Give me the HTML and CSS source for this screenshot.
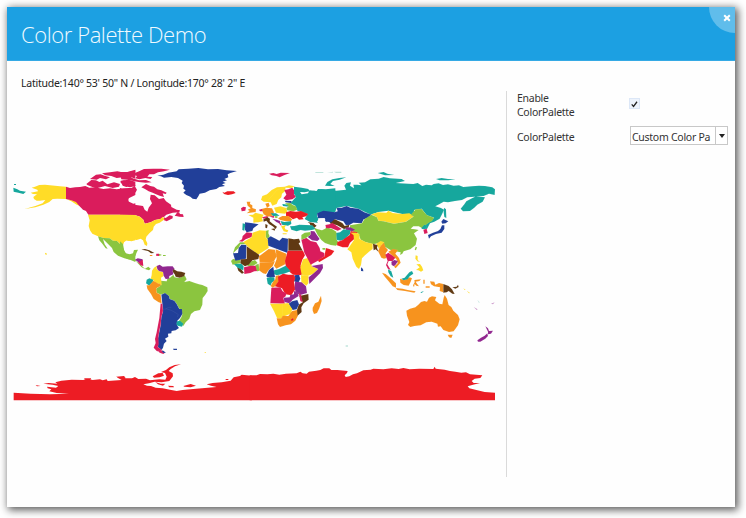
FILE: index.html
```html
<!DOCTYPE html>
<html lang="en">
<head>
<meta charset="utf-8">
<title>Color Palette Demo</title>
<link rel="stylesheet" href="styles.css">
</head>
<body>
<main class="window">
  <header class="header">
    <h1 class="title">Color Palette Demo</h1>
    <button class="close" aria-label="Close"><svg width="8" height="8" viewBox="0 0 8 8"><path d="M1.2 1.2 6.8 6.8M6.8 1.2 1.2 6.8"/></svg></button>
  </header>
  <div class="content">
    <section class="map-pane">
      <p class="coords">Latitude:140° 53' 50" N / Longitude:170° 28' 2" E</p>
      <svg class="map" viewBox="13 160 484 244">
        <!-- Alaska, western Canada and Mexico -->
        <g class="seamless" transform="translate(10 160) scale(.33333)">
          <path class="teal" d="M10 83 22 88 30 92 48 95 40 102 25 98 11 95ZM12 72h6v3h-6Z"/>
          <path class="yellow" d="M168 80 150 79 135 77 105 74 88 75 75 80 65 83 82 89 84 94 62 98 69 102 81 103 70 111 72 117 80 122 90 122 106 120 98 130 76 138 44 147 76 142 100 134 118 126 128 117 142 116 168 117 184 124 200 134 212 139 207 129 194 122 168 117ZM106 278l5 3-2 4-4-3Z"/>
          <path class="pink" d="M168 80 180 84 196 82 210 81 226 78 238 83 255 82 280 87 300 85 320 88 340 85 376 83V105L356 115 354 124 370 131 376 130V164H235L228 153 219 149 208 138 198 126 184 121 168 117ZM229 72 244 60 258 61 268 66 278 62 292 73 312 67 330 72 327 80 308 84 285 78 263 84 247 81 232 75ZM240 57 258 44 272 43 284 47 300 52 288 58 270 54 260 59ZM276 40 300 37 322 34 344 38 376 29V56L362 51 354 58 338 52 320 54 304 48 286 46ZM332 62 356 59 376 65V79L358 74 350 81 338 77Z"/>
          <path class="yellow" d="M234 164H376V241L364 244 350 241 342 247 338 259 330 252 321 243 309 242 299 235 281 234 264 229 247 221 240 211 236 198 239 181Z"/>
          <path class="green" d="M264 229 281 234 299 235 309 242 321 243 330 252 338 259 342 273 350 283 361 285 376 278V306L362 300 343 295 324 287 311 276 306 264 292 250 279 237 284 253 293 266 287 265 277 251 268 241Z"/>
        </g>

        <!-- Eastern Canada, Greenland, Central America -->
        <g class="seamless" transform="translate(120 160) scale(.33333)">
          <path class="pink" d="M0 84 16 90 31 86 44 78 51 89 47 97 34 104 24 117 27 128 43 134 54 136 69 138 74 149 82 155 86 143 96 130 90 117 92 104 104 106 117 117 131 114 138 124 153 134 154 141 170 149 180 151 178 157 158 158 139 164 131 172 137 174 149 166 158 168 158 175 140 184 131 180 132 170 121 177 105 180 92 187 74 191 70 179 60 170 44 165 0 164ZM164 168 175 152 180 162 189 163 191 171 178 170 168 168ZM64 82 78 72 91 78 102 80 112 88 124 91 140 98 137 102 128 100 132 111 119 107 108 103 98 98 86 94 75 87ZM0 65 12 61 32 66 28 75 42 71 47 78 30 82 12 78ZM33 43 54 35 72 27 100 26 124 26 150 29 132 34 114 37 102 43 88 43 82 50 97 51 92 57 76 54 58 58 46 55 51 48ZM0 36 25 36 49 32 34 41 17 45 0 45ZM2 50 28 48 38 55 57 61 78 60 95 67 77 68 56 66 40 63 22 59 4 58Z"/>
          <path class="navy" d="M112 47 130 44 145 38 170 34 176 28 205 26 235 24 264 28 294 27 320 31 351 33 331 39 323 43 325 52 313 57 321 61 308 65 317 69 306 73 315 78 298 81 289 87 269 91 255 98 239 101 235 109 229 118 218 116 211 110 199 105 190 98 197 91 190 86 192 77 185 69 188 62 174 54 154 51 132 53 123 49Z"/>
          <path class="red" d="M307 95 313 98 322 94 341 94 347 99 336 103 324 105 312 102Z"/>
          <path class="yellow" d="M0 164 44 165 60 170 70 179 74 191 92 187 105 180 121 177 128 170 134 178 119 188 108 192 101 200 99 210 88 220 79 230 77 239 82 250 81 258 74 254 69 241 62 236 50 240 37 238 27 243 15 240 8 250 0 242Z"/>
          <path class="green" d="M0 244 9 252 12 269 17 280 29 283 39 280 42 270 54 269 49 280 46 289 41 291 49 304 37 299 23 297 13 290 0 287Z"/>
          <path class="green" d="M46 302 60 312 68 320 75 326 85 320 92 326 87 331 77 328 65 322Z"/>
          <path class="purple" d="M45 299 53 295 68 298 66 305 55 307Z"/>
          <path class="pink" d="M54 307 68 299 70 318 62 316Z"/>
          <path class="brown" d="M64 269 75 267 88 271 103 279 93 280 84 273 74 271Z"/>
          <path class="pink" d="M109 281h8v7l-9-1Z"/><path class="green" d="M117 281 126 285 117 288ZM129 285h8v3h-8Z"/>
          <path class="orange" d="M89 285h8v3h-7Z"/>
          <path class="border-line" d="M0 164 44 165 60 170 70 179 74 191"/>
        </g>

        <!-- South America -->
        <g transform="translate(130 240) scale(.33333)">
          <path class="green" d="M92 122 110 124 112 116 122 112 130 104 134 112 148 114 164 106 170 118 163 126 178 123 195 129 207 133 217 135 232 142 233 153 226 164 218 174 217 194 210 210 193 214 183 222 178 236 167 247 160 258 145 246 154 232 157 222 148 206 140 192 133 182 119 177 117 168 104 160 92 164 80 158 78 146 90 138Z"/>
          <path class="yellow" d="M66 92 72 83 81 77 80 87 87 93 99 96 101 108 93 113 95 136 86 131 77 130 70 121 62 117 65 105Z"/>
          <path class="purple" d="M80 78 89 74 98 80 113 79 128 79 134 87 128 93 130 103 118 108 117 116 107 117 101 107 99 96 87 93 82 88Z"/>
          <path class="brown" d="M130 87 142 94 154 95 166 99 162 109 149 113 137 110 134 103 128 95Z"/>
          <path class="teal" d="M50 119 58 115 70 119 68 127 58 137 48 130Z"/>
          <path class="orange" d="M50 136 58 136 70 122 83 130 91 132 91 138 79 145 80 158 92 164 95 190 86 187 71 177 63 162 52 147Z"/>
          <path class="navy" d="M94 164 105 159 117 168 119 177 133 182 140 192 148 207 156 207 157 222 150 234 142 242 142 257 147 264 137 271 125 273 124 280 114 281 115 290 105 296 110 303 102 311 99 323 95 330 84 322 82 305 87 280 92 254 94 231 99 213 97 192ZM129 326h12v4h-10Z"/>
          <path class="pink" d="M92 190 97 192 99 213 94 231 92 254 88 272 85 292 86 313 83 321 93 328 93 337 80 333 71 323 77 309 75 297 80 277 84 255 88 234ZM83 332 96 331 105 338 100 342 89 338Z"/>
          <path class="navy" d="M95 332h5l8 6-8 1Z"/>
          <path class="teal" d="M141 244 150 242 160 251 156 260 143 257 139 252Z"/>
          <path class="border" d="M99 208 110 207 124 211 138 219 145 224 142 231M106 207 116 202 124 202"/>
          <path class="yellow" d="M224 336h4v2h-4Z"/>
        </g>

        <!-- Asia -->
        <g transform="translate(310 160) scale(.33333)">
          <path class="teal" d="M0 95 12 92 22 94 34 88 50 90 62 87 78 92 108 89 103 77 109 69 123 67 120 77 132 85 130 74 142 74 154 76 146 68 165 67 181 58 206 56 221 51 240 55 275 57 285 63 258 69 295 71 310 72 323 69 337 78 348 74 365 76 371 72 386 70 399 75 414 73 431 77 447 76 460 81 485 79 507 77 525 78 547 82 555 88 554 105 537 101 521 108 500 109 525 112 518 125 502 134 493 143 480 153 459 154 452 146 463 133 469 124 483 116 495 110 472 112 456 120 435 123 414 127 401 125 389 132 376 139 393 144 402 149 396 163 389 176 373 185 360 190 351 207 338 206 346 194 372 173 350 166 335 146 312 150 312 170 260 158 235 152 205 156 182 164 145 146 110 138 80 144 75 156 22 158 20 178 26 188 0 182ZM45 77 52 66 67 58 88 54 109 52 89 59 69 63 61 72 74 78 58 78ZM203 39 221 36 232 41 253 45 225 46ZM378 57 395 54 414 57 437 58 415 61 389 61ZM402 143 408 148 409 174 403 171 401 157Z"/>
          <path class="mist" d="M16 36h24v3H16ZM51 38l18-3 0 3ZM72 35h22v4H78Z"/>
          <path class="navy" d="M22 160 40 152 73 157 83 154 80 144 95 143 110 138 121 143 145 146 163 157 184 164 175 174 161 178 155 190 130 188 118 195 108 196 100 184 84 180 75 178 60 183 48 186 42 176 24 174ZM354 225 369 218 384 213 391 207 396 196 403 196 403 207 395 218 378 222 363 229 357 236ZM394 185 400 177 415 184 407 190 397 191Z"/>
          <path class="yellow" d="M184 163 205 157 229 158 235 152 248 159 277 162 298 160 312 169 303 175 288 185 252 191 221 184 205 182 201 172Z"/>
          <path class="green" d="M120 196 156 190 163 178 184 164 201 172 205 182 221 184 252 191 288 185 312 169 302 165 317 148 335 147 350 165 372 173 366 183 355 189 348 194 337 205 326 199 310 199 302 206 315 208 326 210 312 220 321 236 317 255 301 268 281 274 277 281 270 285 272 277 252 273 240 269 222 259 213 248 189 253 165 246 152 239 145 221 130 215 120 205ZM317 260 321 262 318 271 314 269Z"/>
          <path class="brown" d="M57 181 75 178 84 182 97 189 104 198 118 194 116 203 102 207 80 195 62 192ZM0 188 11 189 17 198 8 201 0 194Z"/>
          <path class="pink" d="M46 195 58 193 67 189 81 198 95 207 83 212 62 204 48 210Z"/>
          <path class="purple" d="M106 203 121 202 136 209 126 214 108 211Z"/>
          <path class="teal" d="M78 219 90 217 101 208 122 211 120 222 105 238 91 242 79 239Z"/>
          <path class="green" d="M11 202 21 207 36 211 50 204 65 206 79 215 79 237 86 248 78 257 62 255 45 249 34 240 23 225Z"/>
          <path class="red" d="M82 246 98 240 106 234 119 225 122 213 143 217 134 226 132 238 120 248 114 262 98 262 81 256Z"/>
          <path class="teal" d="M334 204 343 194 351 198 346 208 336 207Z"/><path class="pink" d="M340 209 350 206 353 219 343 222Z"/>
        </g>

        <!-- South Asia and Oceania -->
        <g transform="translate(310 225) scale(.33333)">
          <path class="yellow" d="M122 23 138 23 148 27 149 42 168 52 188 56 188 72 177 80 165 91 156 100 153 120 147 132 139 125 128 101 124 82 112 73 119 64 132 45 131 31ZM198 57 212 48 223 52 214 61 207 73 203 63Z"/>
          <path class="brown" d="M189 56 203 61 201 68 205 80 197 73 191 76Z"/>
          <path class="navy" d="M153 127 159 132 160 139 153 138Z"/>
          <path class="orange" d="M222 53 226 66 234 75 227 85 230 99 222 101 214 98 204 78 212 62ZM235 80 249 72 264 75 256 86 267 99 272 113 257 130 252 125 263 115 259 102 247 92ZM216 143 227 147 242 160 258 175 258 188 248 184 236 169 225 156ZM257 189 278 191 293 195 317 199 313 203 285 198 262 195ZM270 161 284 165 299 157 306 160 302 170 296 182 281 180 271 173ZM313 165 333 163 328 168 317 170 321 176 327 184 319 182 314 177 312 187 309 181 314 172ZM340 164h4v12h-4ZM360 169 373 170 376 179 387 174 400 177 400 202 389 198 390 187 372 184 363 178ZM347 184h12v4h-12Z"/>
          <path class="pink" d="M226 89 235 83 248 92 256 98 248 108 236 108 232 118 242 135 234 132 228 120 233 108Z"/>
          <path class="purple" d="M244 110 253 105 264 108 258 118 252 124 245 120Z"/>
          <path class="teal" d="M234 133 244 139 250 158 242 154 235 142ZM274 161 284 158 298 142 306 138 310 146 299 154 293 163 281 166ZM331 202 342 198 335 204Z"/>
          <path class="yellow" d="M317 91 323 93 323 105 330 111 322 109 316 101ZM319 118 330 117 336 125 340 136 333 140 325 136 318 135 329 127ZM460 190l7 4-3 1ZM470 197l10 7-3 1Z"/>
          <path class="brown" d="M400 177 416 183 426 193 434 207 427 206 416 198 410 202 400 203ZM427 187 440 185 444 179 446 186 436 191Z"/>
          <path class="orange" d="M289 257 300 251 316 247 325 239 333 231 343 228 351 230 357 218 366 214 379 216 375 226 388 236 397 238 401 218 404 210 411 221 416 240 424 246 430 257 444 270 449 283 444 301 431 319 417 321 400 315 392 304 384 305 382 296 365 290 349 292 332 301 313 303 301 306 294 300 298 291 291 272ZM413 329 428 329 424 339 417 337Z"/>
          <path class="purple" d="M526 304 534 310 537 318 549 317 543 326 534 328 534 320ZM502 346 513 338 524 332 532 325 534 333 526 341 511 350 504 350Z"/>
          <path class="lilac" d="M491 246l12 7-3 2ZM543 236l11-4-5 6Z"/>
          <path class="mist" d="M502 224l7 8-2 2ZM107 361h7v4h-7Z"/>
        </g>

        <!-- Africa and the Middle East -->
        <g transform="translate(225 225) scale(.33333)">
          <path class="pink" d="M42 49 51 43 53 33 65 22 82 24 80 36 62 43 52 50Z"/>
          <path class="green" d="M24 84 30 67 45 52 67 52 65 58 46 58 41 69 24 85ZM121 18 131 15 130 25 134 34 128 43 122 36ZM18 108 24 102 46 104 46 115 23 119ZM65 119 79 109 90 105 98 114 85 122 70 124Z"/>
          <path class="yellow" d="M55 51 80 37 83 23 104 16 123 17 122 37 130 46 131 69 109 83 98 89 66 63Z"/>
          <path class="navy" d="M128 40 137 34 152 41 163 47 172 38 189 41 188 84 150 70 130 62ZM24 85 39 84 41 69 49 59 64 60 63 101 31 107Z"/>
          <path class="brown" d="M190 40 207 43 222 41 226 52 221 55 233 77H190ZM65 64 103 90 100 102 82 106 71 119 60 124 46 115 47 103 65 102ZM36 126 46 129 57 143 51 146 40 137Z"/>
          <path class="orange" d="M102 94 131 72 150 74 155 94 147 109 136 113 104 111ZM104 112 136 113 150 108 143 124 131 135 123 147 114 145 102 136ZM152 73 184 86 182 117 154 131 147 122 155 102Z"/>
          <path class="red" d="M188 77 234 77 240 91 232 104 227 121 230 136 239 146 224 151 204 149 184 133 180 108Z"/>
          <path class="yellow" d="M234 103 248 99 260 115 260 124 280 132 265 147 247 153 230 149 226 127ZM228 150 251 152 250 175 244 182 229 171Z"/>
          <path class="purple" d="M259 123 293 117 294 129 285 145 268 162 253 177 251 157 266 145 280 132Z"/>
          <path class="teal" d="M147 136 162 132 182 122 197 139 177 146 155 151 147 147ZM125 159 135 156 148 157 149 167 140 173 137 182 128 176ZM27 117 49 116 56 124 55 136 46 132 36 127Z"/>
          <path class="navy" d="M124 152 132 135 145 125 147 139 150 156 126 157ZM208 151 222 149 226 161 220 174 207 169Z"/>
          <path class="pink" d="M57 127 77 122 94 122 101 138 88 139 76 144 58 147Z"/><path class="green" d="M91 120 101 116 103 137 96 139Z"/>
          <path class="orange" d="M137 183 145 169 151 163 152 153 163 150 163 166 152 183 143 188Z"/>
          <path class="red" d="M159 155 174 146 190 149 206 149 211 158 207 171 211 193 199 211 181 208 171 190 150 184 160 169Z"/>
          <path class="pink" d="M139 188 166 187 173 199 184 205 182 214 175 219 180 236 136 235Z"/>
          <path class="purple" d="M210 170 230 172 243 184 246 204 226 210 213 205 209 190ZM176 218 194 217 196 209 207 208 207 198 218 202 221 213 203 224 193 235 178 231Z"/>
          <path class="brown" d="M223 213 250 207 251 224 236 235 229 247 230 261 216 274 214 261 221 239 233 232Z"/>
          <path class="pink" d="M221 202 228 211 233 232 226 228 223 213Z"/>
          <path class="navy" d="M191 236 201 229 217 225 222 238 215 253 203 255 194 246Z"/>
          <path class="yellow" d="M135 236 168 236 190 234 202 253 197 266 178 274 172 280 156 279 147 259Z"/>
          <path class="orange" d="M155 280 169 280 173 272 190 273 201 258 216 255 218 274 211 287 198 298 182 301 165 306 159 298ZM263 248 270 235 280 230 288 212 290 228 283 250 276 264 267 267 263 257Z"/>
          <path class="red" d="M197 284 204 279 206 285 200 288Z"/>
          <path class="border" d="M172 238V278M131 69 150 74M207 151 208 172"/>
          <path class="pink" d="M229 44 244 38 257 48 274 52 284 69 286 79 298 84 299 94 279 107 257 119 248 101 238 83Z"/>
          <path class="red" d="M303 69 313 72 328 78 319 90 300 101 282 112 279 105 299 94 300 84Z"/>
          <path class="purple" d="M248 36 256 29 257 18 268 19 277 32 284 42 277 48 261 46Z"/>
          <path class="green" d="M229 30 239 23 256 21 256 29 243 39 229 44ZM292 69h9v5h-8Z"/>
        </g>

        <!-- Europe -->
        <g transform="translate(225 160) scale(.33333)">
          <path class="pink" d="M132 41 145 39 155 42 167 38 195 39 177 46 164 52 154 48 140 46ZM48 145 55 140 63 142 61 152 50 154Z"/>
          <path class="navy" d="M60 187 78 189 101 193 85 205 82 213 65 217 60 209Z"/>
          <path class="orange" d="M65 125 76 125 75 132 82 136 82 144 93 148 92 156 65 160 74 153 68 149 77 145 68 137ZM121 131 131 128 134 138 126 143ZM109 147 124 143 141 145 147 157 143 167 128 170 116 163Z"/>
          <path class="yellow" d="M108 119 112 108 126 103 140 90 156 82 179 80 192 76 209 79 200 84 181 83 182 92 171 101 169 112 160 120 155 132 142 137 137 127 116 125ZM147 143 166 139 184 144 187 157 180 161 153 158ZM70 165 84 164 91 158 116 164 111 174 114 184 100 187 85 188 85 173Z"/>
          <path class="pink" d="M178 90 190 88 202 83 208 92 207 103 213 110 202 118 183 121 175 115 184 104ZM102 149 111 147 113 154 105 154ZM111 172 127 168 130 173 116 176Z"/>
          <path class="teal seam" d="M207 80 230 83 250 87 254 94 239 97 225 96 230 103 249 100 254 91 275 93 279 87 302 88 331 85V155L295 155 279 158 274 167 280 174 278 188 255 186 239 177 248 163 230 157 217 152 211 137 196 130 213 111 207 101ZM172 132 198 135 193 140 174 138ZM53 190 61 192 58 212 52 210ZM137 160 153 160 164 167 144 168ZM167 183 178 186 198 183 199 192 189 197 171 194Z"/>
          <path class="navy seam" d="M277 160 295 152 328 157 336 170 318 188 303 183 297 172 279 174ZM179 122 200 123 198 129 182 127Z"/>
          <path class="white" d="M276 184 286 175 299 174 301 180 294 185 300 194 302 203 292 207 284 198Z"/>
          <path class="green" d="M180 130 196 129 203 135 212 138 217 149 205 154 186 151 184 144 191 139ZM150 168 158 169 157 174 149 173Z"/>
          <path class="red" d="M183 157 196 153 213 155 228 153 250 162 244 169 232 172 236 178 222 179 216 173 204 178 194 171 183 169Z"/>
          <path class="orange" d="M159 175 172 168 191 168 202 179 196 184 179 183 166 180Z"/>
          <path class="purple" d="M142 176 155 179 166 183 165 191 154 186Z"/><path class="pink" d="M132 169 148 168 146 174ZM161 190h8v8Z"/>
          <path class="brown" d="M115 178 127 172 135 176 134 184 144 192 156 200 152 207 143 199 132 192 124 182 116 185ZM138 207 151 205 149 212ZM121 192 128 195 126 205 121 203ZM248 186 263 189 275 197 268 203 259 195Z"/>
          <path class="yellow" d="M168 199 184 195 179 202 181 208 190 211 187 217 176 214ZM173 220h12v3h-12Z"/>
          <path class="teal" d="M195 199 208 198 223 194 243 195 262 196 271 207 261 210 240 212 227 210 215 214 199 209Z"/>
          <path class="border" d="M128 122 145 103 156 90 179 82M153 158 159 162"/>
        </g>

        <!-- Antarctica -->
        <g class="seamless" transform="translate(0 350) scale(.33333)">
          <path class="red" d="M41 128 92 131 150 133 207 131 170 129 148 124 154 118 143 115 141 110 168 113 175 108 158 104 130 101 146 99 172 101 166 97 184 92 215 89 250 90 262 86 278 90 300 88 308 91 320 88 323 93 365 90 350 82 369 82 377 85 396 85 405 81 415 87 438 86 450 91 478 88 496 89 500 80 495 69 483 66 498 60 508 52 524 45 543 43 525 49 512 57 506 63 518 70 519 79 508 93 485 97 464 95 447 100 430 103 441 107 453 108 467 113 488 115 510 119 530 123 548 120 580 117 650 111 633 107 620 103 638 99 665 97 692 92 701 82 720 78 725 74 756 77V150.500H41ZM107 105 122 108 111 109ZM253 85h20v3h-20ZM348 80 372 78 377 83 358 83ZM458 79 475 70 488 69 492 77 479 82 462 83ZM550 108 572 102 588 107 572 112 553 110ZM466 96 482 101 496 101 489 107 474 103ZM504 107 520 108 522 112 508 112ZM677 87h8v3h-8Z"/>
        </g>
        <g class="seamless" transform="translate(250 350) scale(.33333)">
          <path class="red" d="M-1 76 20 76 30 72 52 73 70 71 88 74 108 71 140 70 151 65 158 70 170 71 177 65 199 62 211 60 221 55 238 55 244 60 262 60 293 63 291 69 284 76 287 81 298 79 309 73 321 70 340 61 362 59 370 56 400 58 425 55 446 57 460 54 479 58 508 56 550 57 554 50 557 56 584 59 600 63 616 65 634 68 648 67 660 73 697 76 691 84 674 86 665 93 671 99 690 99 669 104 653 109 658 115 679 120 704 126 735 128V150.500H-1Z"/>
        </g>
      </svg>
    </section>
    <aside class="settings">
      <label class="row">
        <span class="label">Enable ColorPalette</span>
        <span class="check"><svg width="10" height="10" viewBox="0 0 10 10"><path d="M1.900 5.500 3.900 7.700 7.800 2.500"/></svg></span>
      </label>
      <div class="row select-row">
        <span class="label">ColorPalette</span>
        <span class="select"><span class="value">Custom Color Pa</span><span class="arrow"></span></span>
      </div>
    </aside>
  </div>
</main>
</body>
</html>
```
FILE: styles.css
```css
* { box-sizing: border-box; }
body {
  margin: 0;
  height: 518px;
  padding: 7px;
  background: #fff;
  overflow: hidden;
  font-family: "Noto Sans", "Open Sans", sans-serif;
  color: #333;
}
.window {
  width: 728px;
  height: 500px;
  background: #fefefe;
  box-shadow: 2px 2px 8px 1px rgba(0, 0, 0, .65);
}
.header {
  height: 54px;
  display: flex;
  justify-content: space-between;
  overflow: hidden;
  background: #1ca0e2;
  border-bottom: 1px solid #35aae5;
}
.title {
  margin: 0 0 0 14px;
  font: 300 22px/55px "Open Sans", sans-serif;
  letter-spacing: -.42px;
  color: #f0faff;
  white-space: nowrap;
}
.close {
  width: 26px;
  height: 26px;
  padding: 7px 0 0 10px;
  border: 0;
  border-radius: 0 0 0 26px;
  background: #60bdeb;
  display: flex;
  align-items: flex-start;
  justify-content: center;
}
.close path { fill: none; stroke: #fff; stroke-width: 2; }
.content { display: flex; height: 446px; }
.map-pane { width: 499px; padding: 14px 0 0 6px; }
.coords {
  margin: 0 0 0 8px;
  height: 85px;
  font-size: 10.5px;
  line-height: 17px;
  letter-spacing: -.25px;
  color: #222;
  white-space: nowrap;
}
.map { display: block; width: 484px; height: 244px; }
.map path { stroke: rgba(255, 255, 255, .3); stroke-width: .6; }
.map .seamless path, .map .seam { stroke: none; }
.map .border { fill: none; }
.map .seamless .border-line { fill: none; stroke: rgba(255, 255, 255, .3); }
.teal { fill: #16a79d; }
.yellow { fill: #ffdc27; }
.pink { fill: #da1c5c; }
.green { fill: #8bc53f; }
.navy { fill: #213f99; }
.red { fill: #ed1c24; }
.purple { fill: #91278f; }
.brown { fill: #603913; }
.orange { fill: #f7931e; }
.mist { fill: #bfe4dc; }
.lilac { fill: #c993c8; }
.white { fill: #fefefe; }
.settings {
  width: 222px;
  height: 386px;
  margin-top: 30px;
  padding: 0 0 0 10px;
  border-left: 1px solid #dadada;
}
.row {
  display: flex;
  font-size: 10.5px;
  line-height: 14px;
  letter-spacing: -.27px;
}
.label { width: 113px; padding-right: 40px; }
.settings > .row:first-child { height: 35px; }
.check {
  width: 9px;
  height: 9px;
  margin-top: 8px;
  background: #edf3fc;
  outline: 1px solid #dce7f7;
  display: flex;
}
.check path { fill: none; stroke: #222; stroke-width: 1.4; }
.select-row { align-items: center; height: 19px; }
.select-row .label { padding-top: 2px; }
.select {
  width: 98px;
  height: 19px;
  border: 1px solid #c8c8c8;
  display: flex;
  background: #fff;
}
.value {
  width: 84px;
  padding-left: 1px;
  line-height: 20px;
  white-space: nowrap;
  overflow: hidden;
}
.arrow {
  flex: 1;
  border-left: 1px solid #c8c8c8;
  display: flex;
  align-items: center;
  justify-content: center;
}
.arrow::before {
  content: "";
  border: 3px solid transparent;
  border-top: 4px solid #222;
  border-bottom: 0;
}
```
